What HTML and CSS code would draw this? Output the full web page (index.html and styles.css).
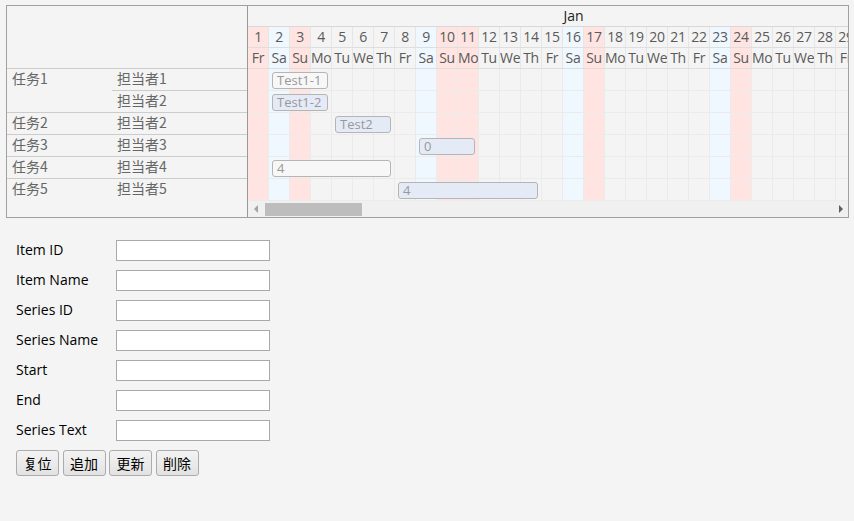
FILE: index.html
```html
<!DOCTYPE html>
<html>
  <head>
    <title>gantt</title>
    <link rel="stylesheet" href="styles.css">
  </head>
  <body>

    <div id="gantt">
        <div id="side">
            <div class="side-head"></div>
            <div class="task">
                <div class="task-name">任务1</div>
                <div class="staff-list">
                    <div class="staff">担当者1</div>
                    <div class="staff">担当者2</div>
                </div>
            </div>
            <div class="task">
                <div class="task-name">任务2</div>
                <div class="staff-list"><div class="staff">担当者2</div></div>
            </div>
            <div class="task">
                <div class="task-name">任务3</div>
                <div class="staff-list"><div class="staff">担当者3</div></div>
            </div>
            <div class="task">
                <div class="task-name">任务4</div>
                <div class="staff-list"><div class="staff">担当者4</div></div>
            </div>
            <div class="task">
                <div class="task-name">任务5</div>
                <div class="staff-list"><div class="staff">担当者5</div></div>
            </div>
        </div>

        <div id="timeline">
            <div id="chart">
                <div class="month">Jan</div>
                <div class="day-row head" id="day-nums"></div>
                <div class="day-row head" id="day-names"></div>
                <div id="rows"></div>
            </div>
            <div class="scrollbar">
                <span class="arrow left"></span>
                <span class="thumb"></span>
                <span class="arrow right"></span>
            </div>
        </div>
    </div>

    <form id="editor">
        <div class="field"><label>Item ID</label><input type="text" name="itemId"></div>
        <div class="field"><label>Item Name</label><input type="text" name="itemName"></div>
        <div class="field"><label>Series ID</label><input type="text" name="seriesId"></div>
        <div class="field"><label>Series Name</label><input type="text" name="seriesName"></div>
        <div class="field"><label>Start</label><input type="text" name="start"></div>
        <div class="field"><label>End</label><input type="text" name="end"></div>
        <div class="field"><label>Series Text</label><input type="text" name="seriesText"></div>
        <div class="buttons">
            <button type="button">复位</button>
            <button type="button">追加</button>
            <button type="button">更新</button>
            <button type="button">削除</button>
        </div>
    </form>

    <script>
        // 2016年1月 (1日は金曜)
        var names = ["Su", "Mo", "Tu", "We", "Th", "Fr", "Sa"];
        var holidays = [1, 11];
        var bars = [
            { start: 2, len: 3, text: "Test1-1", plain: true },
            { start: 2, len: 3, text: "Test1-2" },
            { start: 5, len: 3, text: "Test2" },
            { start: 9, len: 3, text: "0" },
            { start: 2, len: 6, text: "4", plain: true },
            { start: 8, len: 7, text: "4" }
        ];

        function dayClass(d) {
            var w = (d + 4) % 7;
            if (w == 0 || holidays.indexOf(d) >= 0) return "cell holiday";
            if (w == 6) return "cell saturday";
            return "cell";
        }

        function fillRow(row, label) {
            for (var d = 1; d <= 31; d++) {
                var cell = document.createElement("div");
                cell.className = dayClass(d);
                cell.style.gridColumn = d;
                if (label) cell.innerText = label(d);
                row.appendChild(cell);
            }
        }

        fillRow(document.getElementById("day-nums"), function (d) { return d; });
        fillRow(document.getElementById("day-names"), function (d) { return names[(d + 4) % 7]; });

        var rows = document.getElementById("rows");
        bars.forEach(function (b) {
            var row = document.createElement("div");
            row.className = "day-row";
            fillRow(row);
            var bar = document.createElement("div");
            bar.className = b.plain ? "bar plain" : "bar";
            bar.style.gridColumn = b.start + " / span " + b.len;
            bar.innerText = b.text;
            row.appendChild(bar);
            rows.appendChild(row);
        });
    </script>

  </body>
</html>
```

FILE: styles.css
```css
html, body {
    padding: 0;
    margin: 0;
}

body {
    background: #f4f4f4;
    padding: 5px 6px;
    font-family: "Open Sans", "Noto Sans CJK JP", sans-serif;
    font-size: 14px;
}

#gantt {
    width: 843px;
    box-sizing: border-box;
    border: 1px solid #a0a0a0;
    display: flex;
}

/* 左側: 任務と担当者 */
#side {
    width: 240px;
    border-right: 1px solid #999;
    color: #666;
    font-family: "Noto Sans CJK JP", sans-serif;
}

.side-head {
    height: 62px;
    border-bottom: 1px solid #ccc;
}

.task {
    display: flex;
    border-bottom: 1px solid #ccc;
}

.task:last-child {
    border-bottom: none;
}

.task-name {
    width: 100px;
    padding-left: 5px;
    line-height: 18px;
}

.staff-list {
    flex: 1;
}

.staff {
    height: 21px;
    line-height: 18px;
    padding-left: 5px;
}

.staff + .staff {
    border-top: 1px solid #ccc;
}

/* 右側: タイムライン */
#timeline {
    width: 600px;
    overflow: hidden;
}

#chart {
    width: 651px;
}

.month {
    height: 20px;
    line-height: 20px;
    text-align: center;
    color: #222;
    border-bottom: 1px solid #d8d8d8;
}

.day-row {
    display: grid;
    grid-template-columns: repeat(31, 21px);
    grid-template-rows: 21px;
    border-bottom: 1px solid #ebebeb;
}

.day-row.head {
    grid-template-rows: 20px;
    border-bottom-color: #dedede;
    color: #5a5a5a;
    font-size: 14px;
    line-height: 20px;
    text-align: center;
}

.cell {
    grid-row: 1;
    border-right: 1px solid #ebebeb;
    white-space: nowrap;
    overflow: hidden;
    letter-spacing: -0.3px;
}

.head .cell {
    border-right-color: #e6e6e6;
}

.cell.holiday {
    background: #ffe4e1;
}

.cell.saturday {
    background: #eff7ff;
}

.bar {
    grid-row: 1;
    margin: 3px 4px 1px 3px;
    height: 17px;
    box-sizing: border-box;
    border: 1px solid #b5b5b5;
    border-radius: 3px;
    background: #e4ebf7;
    color: #999;
    font-size: 13px;
    line-height: 15px;
    padding-left: 4px;
    white-space: nowrap;
    overflow: hidden;
}

.bar.plain {
    background: #f7f7f7;
}

.scrollbar {
    height: 16px;
    background: #f0f0f0;
    display: flex;
    align-items: center;
}

.arrow {
    width: 0;
    height: 0;
    border-top: 4px solid transparent;
    border-bottom: 4px solid transparent;
}

.arrow.left {
    margin: 0 6px 0 6px;
    border-right: 4px solid #a3a3a3;
}

.arrow.right {
    margin-left: auto;
    margin-right: 5px;
    border-left: 4px solid #5f5f5f;
}

.thumb {
    width: 97px;
    height: 13px;
    background: #bdbdbd;
    margin-left: 1px;
}

/* 入力フォーム */
#editor {
    margin-top: 22px;
    padding-left: 10px;
}

.field {
    display: flex;
    height: 21px;
    margin-bottom: 9px;
}

.field label {
    width: 100px;
    line-height: 20px;
    color: #000;
}

.field input {
    width: 154px;
    height: 21px;
    box-sizing: border-box;
    margin: 0;
    border: 1px solid #a9a9a9;
    background: #fff;
}

.buttons {
    display: flex;
    gap: 3.5px;
}

.buttons button {
    width: 43px;
    height: 26px;
    padding: 0;
    border: 1px solid #acacac;
    border-radius: 3px;
    background: linear-gradient(#f3f3f3, #e2e2e2);
    font-family: "Noto Sans CJK JP", sans-serif;
    font-size: 14px;
    color: #000;
}
```
